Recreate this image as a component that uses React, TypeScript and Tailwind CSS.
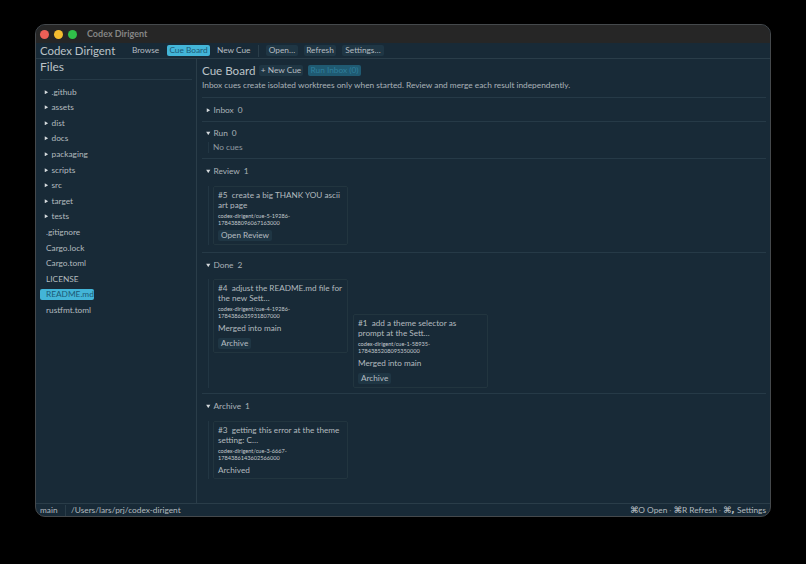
import type { ReactNode } from "react";

const dirs = [".github", "assets", "dist", "docs", "packaging", "scripts", "src", "target", "tests"];
const files = [".gitignore", "Cargo.lock", "Cargo.toml", "LICENSE", "README.md", "rustfmt.toml"];

function Tri({ open }: { open?: boolean }) {
  return (
    <svg width="4.5" height="4.5" viewBox="0 0 5 5" className="shrink-0">
      <path d={open ? "M0.2 0.8H4.8L2.5 4.6Z" : "M0.8 0.2V4.8L4.6 2.5Z"} fill="#d5dadd" />
    </svg>
  );
}

function Btn({ children, className = "" }: { children: ReactNode; className?: string }) {
  return (
    <span className={`flex h-[11px] items-center whitespace-nowrap rounded-[2px] bg-[#1f3644] px-[3px] text-[#b5bcc1] ${className}`}>
      {children}
    </span>
  );
}

function Cue({
  title,
  branch,
  status,
  action,
  className = "",
}: {
  title: string[];
  branch: string[];
  status?: string;
  action?: string;
  className?: string;
}) {
  return (
    <div className={`w-[135px] shrink-0 rounded-[2px] border border-[#22353f] px-[4px] pt-[3px] pb-[3px] ${className}`}>
      <div className="text-[8.2px] leading-[10px] text-[#b3babf]">
        {title.map((t) => (
          <div key={t} className="whitespace-pre">{t}</div>
        ))}
      </div>
      <div className="mt-[3px] text-[5.6px] leading-[6.5px] text-[#c2c8cc]">
        {branch.map((b) => (
          <div key={b}>{b}</div>
        ))}
      </div>
      {status && <div className="mt-[4px] text-[8.2px] leading-[11px] text-[#b3babf]">{status}</div>}
      {action && (
        <div className="mt-[4px] flex">
          <Btn className="text-[8.2px]">{action}</Btn>
        </div>
      )}
    </div>
  );
}

function Header({ label, count, open, top = "mt-[6px]" }: { label: string; count: number; open?: boolean; top?: string }) {
  return (
    <div className={`flex h-[12px] items-center pl-[4px] text-[8.3px] text-[#aab2b8] ${top}`}>
      <Tri open={open} />
      <span className="ml-[3px] whitespace-pre">{label}</span>
      <span className="ml-[4px]">{count}</span>
    </div>
  );
}

function Sep() {
  return <div className="h-px bg-[#263a47]" />;
}

export default function App() {
  return (
    <div className="h-[564px] w-[806px] overflow-hidden bg-black pt-[24px] pl-[35px] font-['Lato',sans-serif]">
      <div className="flex h-[493px] w-[736px] flex-col overflow-hidden rounded-[10px] border border-[#45494c] bg-[#182a37]">
        {/* title bar */}
        <div className="flex h-[18px] shrink-0 items-center bg-[#262626] pl-[4px]">
          <span className="h-[9px] w-[9px] rounded-full bg-[#ec5f57]" />
          <span className="ml-[5px] h-[9px] w-[9px] rounded-full bg-[#f4bd2f]" />
          <span className="ml-[5px] h-[9px] w-[9px] rounded-full bg-[#30c04a]" />
          <span className="ml-[10px] text-[9px] font-bold text-[#858585]">Codex Dirigent</span>
        </div>

        {/* menu bar */}
        <div className="flex h-[16px] shrink-0 items-center whitespace-nowrap border-b border-[#2a3d49] pl-[4px] text-[8.3px] text-[#b5bcc1]">
          <span className="w-[92px] text-[11.4px] text-[#bcc3c8]">Codex Dirigent</span>
          <span className="w-[27px]">Browse</span>
          <span className="ml-[8px] flex h-[11px] w-[43px] items-center justify-center rounded-[2px] bg-[#43b5d8] text-[#1d5a75]">Cue Board</span>
          <span className="ml-[7px] w-[33px]">New Cue</span>
          <span className="ml-[8px] h-[12px] w-px bg-[#2a3d49]" />
          <Btn className="ml-[7px] w-[32px] justify-center">Open…</Btn>
          <Btn className="ml-[6px] w-[32px] justify-center">Refresh</Btn>
          <Btn className="ml-[6px] w-[42px] justify-center">Settings…</Btn>
        </div>

        <div className="flex min-h-0 flex-1">
          {/* file list */}
          <aside className="w-[161px] shrink-0 border-r border-[#2a3d49] px-[4px] text-[8.3px] text-[#b3babf]">
            <div className="flex h-[21px] items-center border-b border-[#263a47] pb-[5px] text-[12px] text-[#bcc3c8]">Files</div>
            <div className="mt-[4px]">
              {dirs.map((d) => (
                <div key={d} className="flex h-[15.6px] items-center pl-[4px]">
                  <Tri />
                  <span className="ml-[3px]">{d}</span>
                </div>
              ))}
              {files.map((f) => (
                <div key={f} className="flex h-[15.6px] items-center">
                  <span className={f === "README.md" ? "flex h-[11px] w-[54px] items-center rounded-[2px] bg-[#43b5d8] pl-[6px] text-[#1d5a75]" : "pl-[6px]"}>
                    {f}
                  </span>
                </div>
              ))}
            </div>
          </aside>

          {/* board */}
          <main className="min-w-0 flex-1 pr-[4px] pl-[5px]">
            <div className="mt-[6px] flex h-[11px] items-center">
              <span className="w-[52px] whitespace-nowrap text-[11.6px] text-[#bcc3c8]">Cue Board</span>
              <Btn className="ml-[5px] w-[44px] justify-center text-[8.3px]">+ New Cue</Btn>
              <span className="ml-[5px] flex h-[11px] w-[53px] items-center justify-center whitespace-nowrap rounded-[2px] bg-[#1f5a72] text-[8.3px] text-[#2f7f9c]">Run Inbox (0)</span>
            </div>
            <p className="mt-[3px] mb-[6px] text-[8.3px] leading-[12px] text-[#aab2b8]">
              Inbox cues create isolated worktrees only when started. Review and merge each result independently.
            </p>
            <Sep />
            <Header label="Inbox" count={0} />
            <div className="h-[5px]" />
            <Sep />
            <Header label="Run" count={0} open top="mt-[5px]" />
            <div className="mt-[3px] ml-[6px] flex h-[11px] items-center border-l border-[#223643] pl-[4px] text-[8.3px] text-[#8f99a0]">No cues</div>
            <div className="h-[5px]" />
            <Sep />
            <Header label="Review" count={1} open />
            <div className="mt-[9px] ml-[6px] border-l border-[#223643] pl-[4px]">
              <Cue
                title={["#5  create a big THANK YOU ascii", "art page"]}
                branch={["codex-dirigent/cue-5-19286-", "1784388096067163000"]}
                action="Open Review"
              />
            </div>
            <div className="h-[7px]" />
            <Sep />
            <Header label="Done" count={2} open />
            <div className="mt-[8px] ml-[6px] flex items-start gap-[5px] border-l border-[#223643] pl-[4px]">
              <Cue
                title={["#4  adjust the README.md file for", "the new Sett…"]}
                branch={["codex-dirigent/cue-4-19286-", "1784386635931807000"]}
                status="Merged into main"
                action="Archive"
              />
              <Cue
                className="mt-[35px]"
                title={["#1  add a theme selector as", "prompt at the Sett…"]}
                branch={["codex-dirigent/cue-1-58935-", "1784385208095350000"]}
                status="Merged into main"
                action="Archive"
              />
            </div>
            <div className="h-[5px]" />
            <Sep />
            <Header label="Archive" count={1} open />
            <div className="mt-[9px] ml-[6px] border-l border-[#223643] pl-[4px]">
              <Cue
                className="!pb-[2px]"
                title={["#3  getting this error at the theme", "setting: C…"]}
                branch={["codex-dirigent/cue-3-6667-", "1784386143602566000"]}
                status="Archived"
              />
            </div>
          </main>
        </div>

        {/* status bar */}
        <div className="flex h-[13px] shrink-0 items-center border-t border-[#2a3d49] pt-px pr-[4px] pl-[4px] text-[8.3px] text-[#b3babf]">
          <span className="w-[25px]">main</span>
          <span className="h-full w-px bg-[#2a3d49]" />
          <span className="ml-[5px]">/Users/lars/prj/codex-dirigent</span>
          <span className="ml-auto flex items-center whitespace-pre">
            <span className="font-['DejaVu_Sans',sans-serif] text-[9px] font-bold">⌘</span>O Open
            <span className="mx-[2px] text-[#5d6b75]">·</span>
            <span className="font-['DejaVu_Sans',sans-serif] text-[9px] font-bold">⌘</span>R Refresh
            <span className="mx-[2px] text-[#5d6b75]">·</span>
            <span className="font-['DejaVu_Sans',sans-serif] text-[9px] font-bold">⌘,</span> Settings
          </span>
        </div>
      </div>
    </div>
  );
}
